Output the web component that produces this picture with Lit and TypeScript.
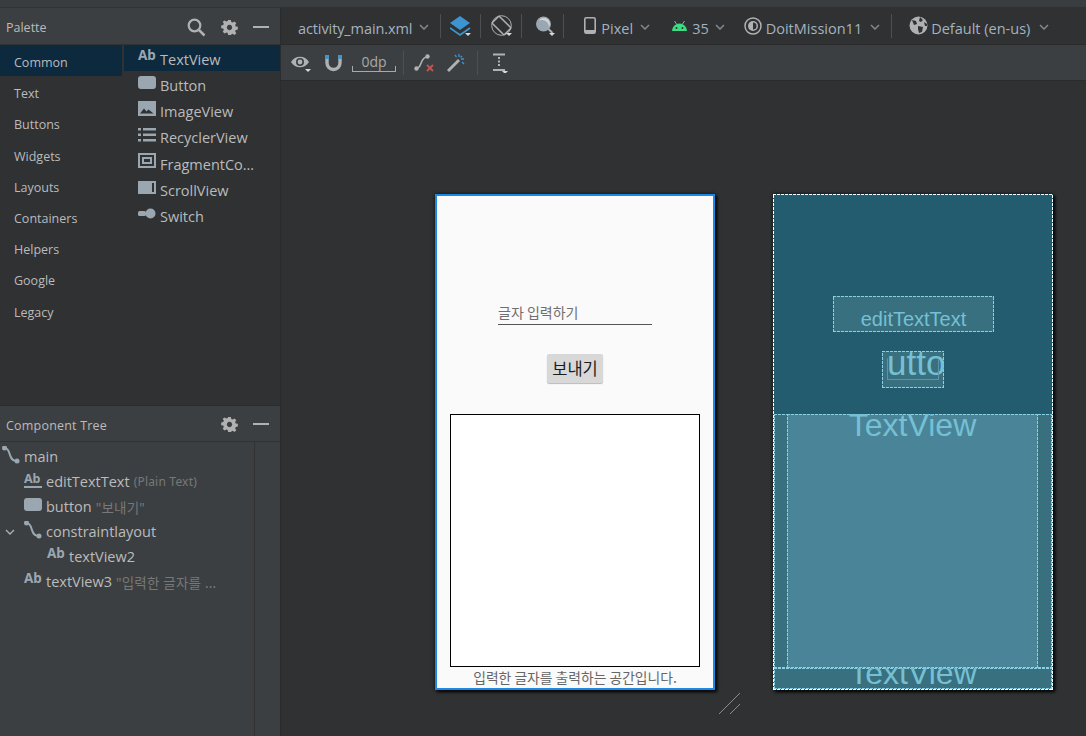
import { LitElement, html, css, svg } from "lit";
import { customElement } from "lit/decorators.js";

const G = "#9aa7b0";

const ab = html`<span class="ab">Ab</span>`;
const abLine = html`<span class="ab under">Ab</span>`;
const btn = html`<svg class="ico" viewBox="0 0 18 18"><rect y="2" width="18" height="13" rx="3" fill="${G}"/></svg>`;
const img = html`<svg class="ico" viewBox="0 0 18 18"><rect y="1" width="18" height="15" fill="${G}"/><path fill="#2f3133" d="M2 13.500l4-5 2.500 3 2-2 5 4z"/></svg>`;
const list = html`<svg class="ico" viewBox="0 0 18 18"><path fill="${G}" d="M0 2h3v2.500H0zM5 2h13v2.500H5zM0 7.500h3V10H0zM5 7.500h13V10H5zM0 13h3v2.500H0zM5 13h13v2.500H5z"/></svg>`;
const frag = html`<svg class="ico" viewBox="0 0 18 18"><path fill="${G}" fill-rule="evenodd" d="M0 1h18v15H0zM2 3v11h14V3z"/><path fill="${G}" fill-rule="evenodd" d="M4 5h10v7H4zM6 7v3h6V7z"/></svg>`;
const scroll = html`<svg class="ico" viewBox="0 0 18 18"><rect y="2" width="18" height="13" fill="${G}"/><rect x="14" y="4" width="2" height="9" fill="#2f3133"/></svg>`;
const sw = html`<svg class="ico" viewBox="0 0 18 18"><rect y="6" width="8" height="5" rx="1.500" fill="${G}"/><circle cx="12.500" cy="8.500" r="5" fill="${G}"/></svg>`;
const chain = html`<svg class="ico" viewBox="0 0 18 18"><path d="M3 2c6 0 3 13 11 13" fill="none" stroke="${G}" stroke-width="2"/><circle cx="2.500" cy="2" r="2.500" fill="${G}"/><circle cx="15" cy="15" r="2.500" fill="${G}"/></svg>`;

const gear = svg`<path fill="#afb1b3" fill-rule="evenodd" d="M7 0h3l.500 2.300 1.500.700 2-1.300 2.100 2.100-1.300 2 .7 1.500 2.300.500v3l-2.300.500-.7 1.500 1.300 2-2.100 2.100-2-1.300-1.500.7L10 17H7l-.500-2.300-1.500-.7-2 1.300L.9 13.200l1.300-2-.7-1.500L-.8 9.200v-3l2.300-.500.700-1.500-1.300-2L3 .6l2 1.300 1.500-.7zM8.500 5.500a3 3 0 1 0 .001 0z"/>`;

const minus = html`<svg class="hd-ico" viewBox="0 0 17 17"><rect y="7" width="16" height="2" fill="#afb1b3"/></svg>`;
const gearIcon = html`<svg class="hd-ico" viewBox="-1 -1 19 19">${gear}</svg>`;
const drop = svg`<path d="M0 0h6l-3 3z" fill="#d8d8d8"/>`;
const chevPath = svg`<path d="M1 1l4 4 4-4" fill="none" stroke="#7f8b91" stroke-width="1.500"/>`;

const iconStyles = css`
  .ico { width: 18px; height: 18px; display: block; margin-top: -3px; flex: none; }
  .ab {
    display: block;
    flex: none;
    box-sizing: border-box;
    width: 18px;
    height: 18px;
    margin-top: -3px;
    padding-top: 0;
    font-family: "Noto Sans", sans-serif;
    font-weight: 700;
    font-size: 13.5px;
    line-height: 14px;
    letter-spacing: -0.2px;
    color: #9aa7b0;
  }
  .ab.under { font-size: 12.5px; line-height: 13px; border-bottom: 2px solid #9aa7b0; height: 16px; }
`;

@customElement("palette-panel")
class PalettePanel extends LitElement {
  static styles = [iconStyles, css`
    :host { display: block; height: 398px; background: #2f3133; }
    .head {
      height: 37px;
      box-sizing: border-box;
      background: #3c3f41;
      border-top: 1px solid #323232;
      display: flex;
      align-items: center;
      padding-top: 2px;
      padding-left: 6px;
      padding-right: 10px;
      font-size: 12.5px;
      color: #bbb;
    }
    .head span { flex: 1; padding-top: 1px; }
    .head svg { margin-left: 15px; display: block; }
    .hd-ico { width: 17px; height: 17px; }
    .find { width: 19px; height: 19px; }
    .body { display: grid; grid-template-columns: 122px 1fr; column-gap: 2px; padding-top: 1px; }
    .rail-row {
      height: 31.2px;
      line-height: 36.400px;
      padding-left: 14px;
      font-size: 12.500px;
      color: #bbb;
    }
    .rail-row.on, .item.on { background: #0d293e; }
    .item {
      height: 26.2px;
      display: flex;
      align-items: center;
      gap: 4px;
      padding-left: 14px;
      font-size: 14.5px;
      color: #bbb;
    }
    .item span:last-child { padding-top: 2.600px; }
  `];

  rail = ["Common", "Text", "Buttons", "Widgets", "Layouts", "Containers", "Helpers", "Google", "Legacy"];
  items = [
    [ab, "TextView"],
    [btn, "Button"],
    [img, "ImageView"],
    [list, "RecyclerView"],
    [frag, "FragmentCo…"],
    [scroll, "ScrollView"],
    [sw, "Switch"],
  ];

  render() {
    return html`
      <div class="head">
        <span>Palette</span>
        <svg class="find" viewBox="0 0 19 19"><circle cx="7.500" cy="7.500" r="5.800" fill="none" stroke="#afb1b3" stroke-width="2.200"/><path d="M12 12l5.500 5.500" stroke="#afb1b3" stroke-width="2.500"/></svg>
        ${gearIcon}
        ${minus}
      </div>
      <div class="body">
        <div>
          ${this.rail.map((r, i) => html`<div class="rail-row ${i == 0 ? "on" : ""}">${r}</div>`)}
        </div>
        <div>
          ${this.items.map((it, i) => html`<div class="item ${i == 0 ? "on" : ""}">${it[0]}<span>${it[1]}</span></div>`)}
        </div>
      </div>
    `;
  }
}

@customElement("tree-panel")
class TreePanel extends LitElement {
  static styles = [iconStyles, css`
    :host { display: flex; flex-direction: column; flex: 1; background: #3c3f41; }
    .head {
      height: 36px;
      box-sizing: border-box;
      border-bottom: 1px solid #323232;
      display: flex;
      align-items: center;
      padding-top: 1px;
      padding-left: 6px;
      padding-right: 10px;
      font-size: 12.5px;
      letter-spacing: 0.2px;
      color: #bbb;
    }
    .head span { flex: 1; padding-top: 2px; }
    .head svg { margin-left: 15px; display: block; }
    .hd-ico { width: 17px; height: 17px; }
    .body { flex: 1; width: 254px; border-right: 1px solid #323232; padding-top: 2px; }
    .row {
      height: 25px;
      display: flex;
      align-items: center;
      gap: 4px;
      font-size: 14.5px;
      color: #bbb;
      white-space: nowrap;
    }
    .lv0 { padding-left: 2px; }
    .lv1 { padding-left: 24px; }
    .lv2 { padding-left: 47px; }
    .hint { color: #787878; font-size: 12px; font-family: "Noto Sans", "Noto Sans CJK KR", sans-serif; letter-spacing: 0.2px; }
    .ko { font-size: 13.5px; }
    .exp { width: 10px; height: 6px; position: absolute; margin-left: -19px; }
    .lv1.branch { position: relative; }
  `];

  render() {
    return html`
      <div class="head"><span>Component Tree</span>${gearIcon}${minus}</div>
      <div class="body">
        <div class="row lv0">${chain}<span>main</span></div>
        <div class="row lv1">${abLine}<span>editTextText</span><span class="hint">(Plain Text)</span></div>
        <div class="row lv1">${btn}<span>button</span><span class="hint ko">"보내기"</span></div>
        <div class="row lv1 branch"><svg class="exp" viewBox="0 0 10 6"><path d="M1 1l4 4 4-4" fill="none" stroke="#afb1b3" stroke-width="1.300"/></svg>${chain}<span>constraintlayout</span></div>
        <div class="row lv2">${ab}<span>textView2</span></div>
        <div class="row lv1">${ab}<span>textView3</span><span class="hint ko">"입력한 글자를 ...</span></div>
      </div>
    `;
  }
}

@customElement("design-toolbar")
class DesignToolbar extends LitElement {
  static styles = css`
    :host { display: block; }
    .top {
      height: 37px;
      box-sizing: border-box;
      background: #2f3133;
      display: flex;
      align-items: center;
      font-size: 14.5px;
      color: #a4b3bf;
      white-space: nowrap;
    }
    .top span { padding-top: 5px; }
    .bottom {
      height: 37px;
      box-sizing: border-box;
      background: #3c3f41;
      border-top: 1px solid #2b2b2b;
      border-bottom: 1px solid #2b2b2b;
      display: flex;
      align-items: center;
      color: #a9b7c0;
    }
    .top span.file { margin-left: 17px; letter-spacing: -0.1px; }
    .chev { width: 10px; height: 6px; flex: none; margin-top: 3px; }
    .sep { width: 1px; height: 24px; background: #4c5052; flex: none; }
    svg { display: block; flex: none; }
    .i22 { width: 22px; height: 22px; }
    .phone { width: 12px; height: 17px; }
    .droid { width: 17px; height: 12px; }
    .circle { width: 18px; height: 18px; }
    .globe { width: 19px; height: 19px; }
    .e { width: 20px; height: 20px; }
    .top span.ml3 { margin-left: 3px; }
    .top span.ml4 { margin-left: 4px; }
    .top span.ml5 { margin-left: 5px; }
    .ml6 { margin-left: 6px; }
    .ml7 { margin-left: 7px; }
    .ml8 { margin-left: 8px; }
    .ml9 { margin-left: 9px; }
    .ml10 { margin-left: 10px; }
    .ml11 { margin-left: 11px; }
    .ml12 { margin-left: 12px; }
    .ml13 { margin-left: 13px; }
    .ml14 { margin-left: 14px; }
    .ml17 { margin-left: 17px; }
    .ml19 { margin-left: 19px; }
    .ml20 { margin-left: 20px; }
    .ml21 { margin-left: 21px; }
    .dp {
      position: relative;
      margin-left: 8px;
      width: 44px;
      height: 18px;
      font-size: 14px;
      line-height: 15px;
      text-align: center;
      color: #a9a9a9;
    }
    .dp::after {
      content: "";
      position: absolute;
      left: 0;
      right: 0;
      bottom: 0;
      height: 6px;
      box-sizing: border-box;
      border: 1px solid #a9a9a9;
      border-top: none;
    }
  `;

  render() {
    const chev = (c: string) => html`<svg class="chev ${c}" viewBox="0 0 10 6">${chevPath}</svg>`;
    return html`
      <div class="top">
        <span class="file">activity_main.xml</span>${chev("ml7")}
        <div class="sep ml11"></div>
        <svg class="i22 ml9" viewBox="0 0 22 22"><path d="M10 1l10 7-10 7L0 8z" fill="#3d94d0"/><path d="M0 13l10 7 10-7" fill="none" stroke="#3d94d0" stroke-width="1.800"/><g transform="translate(15 18)">${drop}</g></svg>
        <div class="sep ml8"></div>
        <svg class="i22 ml10" viewBox="0 0 22 22"><circle cx="10.500" cy="10.500" r="9.800" fill="none" stroke="#afb1b3" stroke-width="1"/><rect x="5.500" y="2" width="10" height="17" rx="1" transform="rotate(-45 10.500 10.500)" fill="#2f3133" stroke="#afb1b3" stroke-width="1.500"/><g transform="translate(15 18)">${drop}</g></svg>
        <div class="sep ml8"></div>
        <svg class="i22 ml13" viewBox="0 0 22 22"><circle cx="8.500" cy="9" r="7.500" fill="#9aa7b0"/><path d="M3 9a6 6 0 0 1 12 0a7 7 0 0 0-12 0z" fill="#d0d4d6" transform="rotate(35 9 9)"/><path d="M13.500 14l4 4" stroke="#afb1b3" stroke-width="2"/><g transform="translate(14 18)">${drop}</g></svg>
        <div class="sep ml6"></div>
        <svg class="phone ml20" viewBox="0 0 12 17"><rect x=".8" y=".8" width="10.400" height="15.400" rx="1.500" fill="none" stroke="#afb1b3" stroke-width="1.600"/><rect x="1" y="13" width="10" height="3" fill="#afb1b3"/></svg><span class="ml5">Pixel</span>${chev("ml7")}
        <svg class="droid ml21" viewBox="0 0 17 12"><path d="M1 11a7.500 7.500 0 0 1 15 0z" fill="#3ddc84"/><path d="M3.500 1l2 3M13.500 1l-2 3" stroke="#3ddc84" stroke-width="1"/><circle cx="5.500" cy="8" r="1" fill="#2f3133"/><circle cx="11.500" cy="8" r="1" fill="#2f3133"/></svg><span class="ml4">35</span>${chev("ml6")}
        <svg class="circle ml19" viewBox="0 0 18 18"><circle cx="9" cy="9" r="8" fill="none" stroke="#afb1b3" stroke-width="1.500"/><circle cx="9" cy="9" r="5" fill="#afb1b3"/><path d="M9 5.500a3.500 3.500 0 0 1 0 7z" fill="#2f3133"/></svg><span class="ml4">DoitMission11</span>${chev("ml8")}
        <div class="sep ml11"></div>
        <svg class="globe ml17" viewBox="0 0 19 19"><circle cx="9.500" cy="9.500" r="9" fill="#afb1b3"/><path d="M3 4l4 1 1 3-3 1zM11 1l3 3-2 2-2-1zM9 10l5 1-1 5-3 1-1-4zM15 6l3 2v2l-2 0z" fill="#2f3133"/></svg><span class="ml3">Default (en-us)</span>${chev("ml9")}
      </div>
      <div class="bottom">
        <svg class="e ml10" viewBox="0 0 20 20"><path d="M0 9c4-7 14-7 18 0c-4 7-14 7-18 0z" fill="#afb1b3"/><circle cx="9" cy="9" r="4" fill="#3c3f41"/><circle cx="9" cy="9" r="2.400" fill="#afb1b3"/><g transform="translate(14 16)">${drop}</g></svg>
        <svg class="e ml13" viewBox="0 0 20 20"><path d="M3 2v8a6.500 6.500 0 0 0 13 0V2" fill="none" stroke="#afb1b3" stroke-width="3.400"/><path d="M1.300 2h3.400v4H1.300zM14.300 2h3.400v4h-3.400z" fill="#3d94d0"/></svg>
        <div class="dp">0dp</div>
        <div class="sep ml7"></div>
        <svg class="e ml10" viewBox="0 0 20 20"><path d="M3 15C8 15 6 4 13 4" fill="none" stroke="#afb1b3" stroke-width="1.600"/><circle cx="2.500" cy="15.500" r="2.200" fill="#afb1b3"/><circle cx="13.500" cy="3.500" r="2.200" fill="#afb1b3"/><path d="M13 12l6 6M19 12l-6 6" stroke="#c75450" stroke-width="1.800"/></svg>
        <svg class="e ml12" viewBox="0 0 20 20"><path d="M1 17L12 6l2 2L3 19z" fill="#afb1b3"/><path d="M13 1v3M18 6h-3M16 3l-1.500 1.500M18 11l-2-2M9 2l1.500 2" stroke="#3d94d0" stroke-width="1.300"/></svg>
        <div class="sep ml11"></div>
        <svg class="e ml14" viewBox="0 0 20 20"><path d="M1 1.500h12M1 17h12" stroke="#afb1b3" stroke-width="2"/><path d="M7 4v10" stroke="#afb1b3" stroke-width="2" stroke-dasharray="2 1.500"/><g transform="translate(10 18)">${drop}</g></svg>
      </div>
    `;
  }
}

@customElement("design-canvas")
class DesignCanvas extends LitElement {
  static styles = css`
    :host {
      display: flex;
      flex: 1;
      background: #2f3133;
      padding-top: 113px;
      padding-left: 154px;
      gap: 58px;
      position: relative;
      overflow: hidden;
    }
    .phone {
      width: 280px;
      height: 496px;
      box-sizing: border-box;
      position: relative;
      overflow: hidden;
      flex: none;
    }
    .frame-wrap { box-shadow: 0 0 3px #111, 2px 2px 3px #000; flex: none; height: 496px; }
    .design { background: #fafafa; border: 2px solid #1e88e5; font-family: "Noto Sans CJK KR", "Noto Sans", sans-serif; }
    .hint-text {
      position: absolute; left: 61px; top: 106px; width: 154px; height: 22px;
      border-bottom: 1px solid #555;
      font-size: 14px; line-height: 21px; color: #6f6f6f;
    }
    .send {
      position: absolute; left: 110px; top: 158px; width: 56px; height: 29px;
      background: #d8d8d8; border-radius: 2px; box-shadow: 0 1px 1px #bbb;
      font-size: 16.5px; line-height: 28px; text-align: center; color: #1c1c1c;
    }
    .out {
      position: absolute; left: 13px; top: 218px; width: 250px; height: 253px;
      box-sizing: border-box; background: #fff; border: 1.500px solid #000;
    }
    .cap {
      position: absolute; left: 0; right: 0; top: 471px; text-align: center;
      font-size: 13.8px; line-height: 20px; color: #666;
    }
    .blue {
      --dash: #fff;
      --fill: #235c6f;
      font-family: "Liberation Sans", sans-serif;
      color: #75c0d4;
    }
    .dashed {
      background:
        repeating-linear-gradient(90deg, var(--dash) 0 3px, transparent 3px 4px) 0 0 / 100% 1px no-repeat,
        repeating-linear-gradient(90deg, var(--dash) 0 3px, transparent 3px 4px) 0 100% / 100% 1px no-repeat,
        repeating-linear-gradient(0deg, var(--dash) 0 3px, transparent 3px 4px) 0 0 / 1px 100% no-repeat,
        repeating-linear-gradient(0deg, var(--dash) 0 3px, transparent 3px 4px) 100% 0 / 1px 100% no-repeat,
        var(--fill);
    }
    .bx { --dash: #8ad0e2; --fill: #39707f; position: absolute; box-sizing: border-box; overflow: hidden; text-align: center; white-space: nowrap; }
    .edit { left: 60px; top: 102px; width: 161px; height: 36px; font-size: 20px; line-height: 46px; }
    .btn { left: 109px; top: 157px; width: 62px; height: 37px; padding-left: 5px; font-size: 35px; line-height: 24px; }
    .btn-in { position: absolute; left: 114px; top: 164px; width: 52px; height: 22px; border: 1px solid #5d95a6; box-sizing: border-box; border-top-color: transparent; }
    .band { left: 1px; top: 220px; width: 278px; height: 254px; }
    .band-in { --fill: #4a8499; left: 14px; top: 220px; width: 251px; height: 254px; font-size: 32px; line-height: 22px; }
    .foot { left: 1px; top: 474px; width: 278px; height: 21px; font-size: 32px; line-height: 11px; }
    .resize { position: absolute; left: 438px; top: 612px; width: 22px; height: 22px; }
  `;

  render() {
    return html`
      <div class="frame-wrap">
        <div class="phone design">
          <div class="hint-text">글자 입력하기</div>
          <div class="send">보내기</div>
          <div class="out"></div>
          <div class="cap">입력한 글자를 출력하는 공간입니다.</div>
        </div>
      </div>
      <div class="frame-wrap">
        <div class="phone blue dashed">
          <div class="bx dashed band"></div>
          <div class="bx dashed band-in">TextView</div>
          <div class="bx dashed foot">TextView</div>
          <div class="bx dashed edit">editTextText</div>
          <div class="bx dashed btn">utto</div>
          <div class="btn-in"></div>
        </div>
      </div>
      <svg class="resize" viewBox="0 0 22 22"><path d="M0 21L21 0M11 21L21 11" stroke="#8a8d8f" stroke-width="1"/></svg>
    `;
  }
}

@customElement("app-root")
class AppRoot extends LitElement {
  static styles = css`
    :host {
      display: grid;
      grid-template-columns: 280px 1fr;
      width: 1086px;
      height: 736px;
      box-sizing: border-box;
      padding-top: 7px;
      background: #3a3d3f;
      font-family: "Open Sans", "Noto Sans CJK KR", sans-serif;
      overflow: hidden;
    }
    .left { display: flex; flex-direction: column; gap: 1px; background: #2b2b2b; height: 729px; }
    .right { display: flex; flex-direction: column; height: 729px; border-left: 1px solid #2b2b2b; }
  `;

  render() {
    return html`
      <div class="left">
        <palette-panel></palette-panel>
        <tree-panel></tree-panel>
      </div>
      <div class="right">
        <design-toolbar></design-toolbar>
        <design-canvas></design-canvas>
      </div>
    `;
  }
}
